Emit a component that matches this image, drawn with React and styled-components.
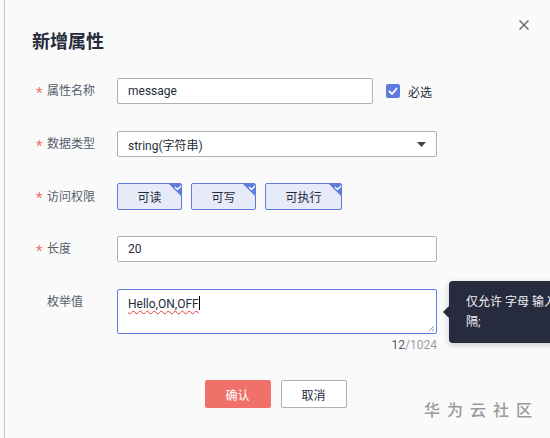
import React from "react";
import styled, { createGlobalStyle } from "styled-components";

const GlobalStyle = createGlobalStyle`
  body {
    margin: 0;
    background: #fafafa;
    font-family: Roboto, "Noto Sans CJK SC", sans-serif;
    color: #252b3a;
  }
`;

const Page = styled.div`
  width: 550px;
  height: 438px;
  display: flex;
  overflow: hidden;
  position: relative;
`;

const EdgeRail = styled.div`
  width: 4px;
  flex-shrink: 0;
  border-right: 1px solid #c4c4c4;
  background: #fbfbfb;
`;

const Dialog = styled.div`
  flex: 1;
  padding: 30px 31px 0 27px;
  display: flex;
  flex-direction: column;
`;

const Header = styled.div`
  display: flex;
  justify-content: space-between;
  align-items: flex-start;
  margin-right: -10px;
`;

const Title = styled.h2`
  margin: 0;
  font-size: 18px;
  line-height: 24px;
  font-weight: 700;
  color: #252b3a;
`;

const CloseButton = styled.button`
  border: 0;
  background: none;
  padding: 0;
  margin-top: -10px;
  width: 10px;
  height: 10px;
  display: flex;
  cursor: pointer;
`;

const Form = styled.div`
  margin-top: 24px;
  padding-left: 4px;
  display: flex;
  flex-direction: column;
`;

const Row = styled.div`
  display: flex;
  align-items: ${(p) => (p.$top ? "flex-start" : "center")};
  margin-bottom: ${(p) => p.$gap ?? 27}px;
`;

const Label = styled.div`
  width: 81px;
  height: 26px;
  flex-shrink: 0;
  font-size: 12px;
  line-height: 26px;
  color: #575d6c;
  display: flex;
  align-items: center;
  padding-left: ${(p) => (p.$required ? 0 : 11)}px;
  box-sizing: border-box;
`;

const Star = styled.span`
  color: #f66f6a;
  font-size: 15px;
  line-height: 1;
  width: 11px;
  margin-top: 4px;
`;

const Input = styled.div`
  width: ${(p) => p.$w}px;
  height: 26px;
  box-sizing: border-box;
  border: 1px solid #adb0b8;
  border-radius: 2px;
  background: #fff;
  font-size: 12px;
  padding: 0 10px;
  display: flex;
  align-items: center;
  justify-content: space-between;
  color: #252b3a;
`;

const Check = styled.label`
  display: flex;
  align-items: center;
  gap: 8px;
  margin-left: 13px;
  font-size: 12px;
  color: #252b3a;
`;

const CheckBox = styled.span`
  width: 14px;
  height: 14px;
  border-radius: 2px;
  background: #5e7ce0;
  display: flex;
  align-items: center;
  justify-content: center;
`;

const Chips = styled.div`
  display: flex;
  gap: 9px;
`;

const Chip = styled.div`
  position: relative;
  width: ${(p) => p.$w}px;
  height: 27px;
  box-sizing: border-box;
  border: 1px solid #5e7ce0;
  border-radius: 2px;
  background: #e6eaf9;
  font-size: 12px;
  display: flex;
  align-items: center;
  justify-content: center;
  color: #252b3a;
  overflow: hidden;
`;

const ChipCorner = styled.svg`
  position: absolute;
  top: -1px;
  right: -1px;
`;

const AreaWrap = styled.div`
  position: relative;
  width: 320px;
`;

const TextArea = styled.div`
  position: relative;
  height: 45px;
  box-sizing: border-box;
  border: 1px solid #5e7ce0;
  border-radius: 2px;
  background: #fff;
  padding: 6px 10px;
  font-size: 12px;
  line-height: 16px;
`;

const Typed = styled.span`
  text-decoration: underline wavy #e53935;
  text-decoration-thickness: 1px;
  text-underline-offset: 2px;
`;

const Caret = styled.span`
  display: inline-block;
  width: 1px;
  height: 14px;
  background: #000;
  vertical-align: -2px;
`;

const Grip = styled.svg`
  position: absolute;
  right: 1px;
  bottom: 1px;
`;

const Counter = styled.div`
  text-align: right;
  font-size: 12px;
  margin-top: 4px;
  color: #9a9da5;
  b {
    font-weight: 400;
    color: #575d6c;
  }
`;

const Tooltip = styled.div`
  position: absolute;
  left: calc(100% + 12px);
  top: -8px;
  width: 240px;
  height: 62px;
  box-sizing: border-box;
  background: #262b3e;
  border-radius: 4px;
  padding: 11px 17px;
  font-size: 12px;
  line-height: 20px;
  color: #f0f1f5;
  white-space: nowrap;
  box-shadow: 0 2px 6px rgba(0, 0, 0, 0.2);

  &::before {
    content: "";
    position: absolute;
    left: -6px;
    top: 25px;
    border-style: solid;
    border-width: 6px 6px 6px 0;
    border-color: transparent #262b3e transparent transparent;
  }
`;

const Footer = styled.div`
  display: flex;
  justify-content: center;
  gap: 10px;
  margin-top: 28px;
`;

const Button = styled.button`
  width: 66px;
  height: 28px;
  border-radius: 2px;
  font-family: inherit;
  font-size: 12px;
  border: 1px solid ${(p) => (p.$primary ? "#f0706a" : "#adb0b8")};
  background: ${(p) => (p.$primary ? "#f0706a" : "#fff")};
  color: ${(p) => (p.$primary ? "#fff" : "#252b3a")};
`;

const Watermark = styled.div`
  position: absolute;
  right: 11px;
  bottom: 17px;
  font-size: 16px;
  letter-spacing: 7px;
  color: #9b9b9b;
  font-weight: 500;
`;

const corner = (
  <ChipCorner width="14" height="14" viewBox="0 0 14 14">
    <polygon points="0,0 14,0 14,14" fill="#5e7ce0" />
    <polyline points="7,4 9.5,6.5 14,2" fill="none" stroke="#fff" strokeWidth="1.4" />
  </ChipCorner>
);

const FieldLabel = ({ required, children }) => (
  <Label $required={required}>
    {required && <Star>*</Star>}
    {children}
  </Label>
);

export default function App() {
  return (
    <Page>
      <GlobalStyle />
      <EdgeRail />
      <Dialog>
        <Header>
          <Title>新增属性</Title>
          <CloseButton aria-label="关闭">
            <svg width="10" height="10" viewBox="0 0 10 10">
              <path d="M0.5 0.5 L9.5 9.5 M9.5 0.5 L0.5 9.5" stroke="#5f6068" strokeWidth="1.3" />
            </svg>
          </CloseButton>
        </Header>

        <Form>
          <Row>
            <FieldLabel required>属性名称</FieldLabel>
            <Input $w={256}>message</Input>
            <Check>
              <CheckBox>
                <svg width="10" height="8" viewBox="0 0 10 8">
                  <polyline points="1,4 4,7 9,1" fill="none" stroke="#fff" strokeWidth="1.8" />
                </svg>
              </CheckBox>
              必选
            </Check>
          </Row>

          <Row $gap={26}>
            <FieldLabel required>数据类型</FieldLabel>
            <Input $w={320}>
              string(字符串)
              <svg width="9" height="5" viewBox="0 0 9 5">
                <polygon points="0,0 9,0 4.5,5" fill="#3f4350" />
              </svg>
            </Input>
          </Row>

          <Row $gap={26}>
            <FieldLabel required>访问权限</FieldLabel>
            <Chips>
              <Chip $w={65}>可读{corner}</Chip>
              <Chip $w={65}>可写{corner}</Chip>
              <Chip $w={77}>可执行{corner}</Chip>
            </Chips>
          </Row>

          <Row>
            <FieldLabel required>长度</FieldLabel>
            <Input $w={320}>20</Input>
          </Row>

          <Row $top $gap={0}>
            <FieldLabel>枚举值</FieldLabel>
            <AreaWrap>
              <TextArea>
                <Typed>Hello,ON,OFF</Typed>
                <Caret />
                <Grip width="7" height="7" viewBox="0 0 7 7">
                  <path d="M6 1 L1 6 M6 4 L4 6" stroke="#7f93de" strokeWidth="1" />
                </Grip>
              </TextArea>
              <Counter>
                <b>12</b>/1024
              </Counter>
              <Tooltip>
                仅允许 字母 输入，多个值用逗号分
                <br />
                隔;
              </Tooltip>
            </AreaWrap>
          </Row>
        </Form>

        <Footer>
          <Button $primary>确认</Button>
          <Button>取消</Button>
        </Footer>
      </Dialog>
      <Watermark>华为云社区</Watermark>
    </Page>
  );
}
